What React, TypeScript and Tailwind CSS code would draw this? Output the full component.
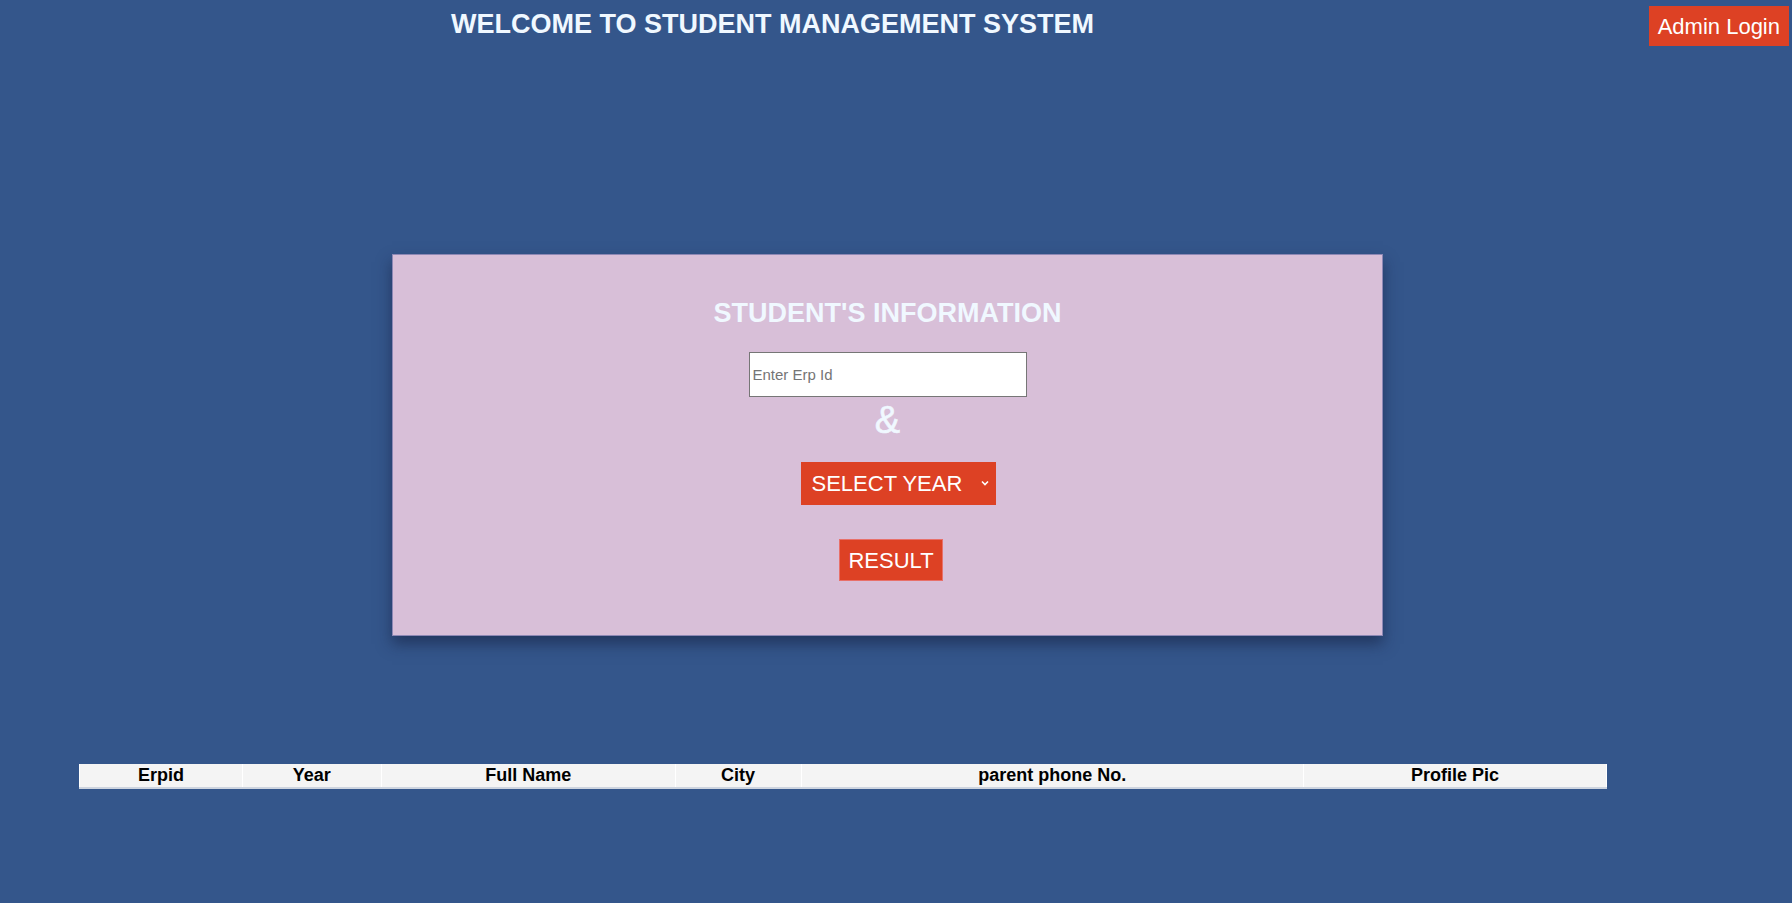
import React from 'react';

const columns = [
  { label: 'Erpid', width: 'w-[163px]' },
  { label: 'Year', width: 'w-[139px]' },
  { label: 'Full Name', width: 'w-[294px]' },
  { label: 'City', width: 'w-[126px]' },
  { label: 'parent phone No.', width: 'w-[503px]' },
  { label: 'Profile Pic', width: 'w-[303px]' },
];

export default function App() {
  return (
    <div className="min-h-[903px] w-full bg-[#34568b] font-['Liberation_Sans',Arial,sans-serif]">
      {/* header */}
      <header className="flex items-start justify-between pl-[451px] pr-[3px]">
        <h1 className="mt-[9px] text-[27px] font-bold leading-[31px] text-[#f0f8ff]">
          WELCOME TO STUDENT MANAGEMENT SYSTEM
        </h1>
        <button className="mt-[6px] h-[40px] bg-[#dd4124] px-[9px] text-[22px] leading-[25px] text-white">
          Admin Login
        </button>
      </header>

      {/* search card */}
      <section className="ml-[392px] mt-[208px] flex h-[382px] w-[991px] flex-col items-center border border-[#8d88b5] bg-[#d8bfd8] shadow-[0_8px_14px_rgba(20,30,60,0.55)]">
        <h2 className="mt-[43px] text-[27px] font-bold leading-[31px] text-[#f0f8ff]">STUDENT'S INFORMATION</h2>
        <input
          type="text"
          placeholder="Enter Erp Id"
          className="mt-[23px] h-[45px] w-[278px] border border-[#767676] bg-white px-[3px] text-[15px] text-black placeholder:text-[#757575] outline-none"
        />
        <span className="mt-[2px] text-[38px] leading-[42px] text-[#f0f8ff] [-webkit-text-stroke:0.6px_#f0f8ff]">&amp;</span>
        <div className="relative ml-[21px] mt-[21px] flex h-[43px] w-[195px] items-center bg-[#dd4124]">
          <select className="h-full w-full appearance-none bg-transparent pl-[11px] text-[22px] text-white outline-none">
            <option>SELECT YEAR</option>
            <option>FIRST YEAR</option>
            <option>SECOND YEAR</option>
            <option>THIRD YEAR</option>
            <option>FOURTH YEAR</option>
          </select>
          <svg
            className="pointer-events-none absolute right-[6px] top-[17px]"
            width="10"
            height="8"
            viewBox="0 0 10 8"
            fill="none"
          >
            <path d="M2 2.5 L5 5.5 L8 2.5" stroke="white" strokeWidth="1.6" />
          </svg>
        </div>
        <button className="ml-[7px] mt-[34px] h-[42px] w-[104px] border border-[#e8706a] bg-[#dd4124] text-[22px] leading-[25px] text-white">
          RESULT
        </button>
      </section>

      {/* result table */}
      <div className="ml-[79px] mt-[128px] w-[1528px]">
        <table className="w-full border-collapse bg-[#f4f4f4]">
          <thead>
            <tr className="border-b-2 border-[#cdd4df]">
              {columns.map((c) => (
                <th
                  key={c.label}
                  className={`${c.width} border-x border-white py-[1px] text-center text-[18px] font-bold leading-[21px] text-black`}
                >
                  {c.label}
                </th>
              ))}
            </tr>
          </thead>
        </table>
      </div>
    </div>
  );
}
